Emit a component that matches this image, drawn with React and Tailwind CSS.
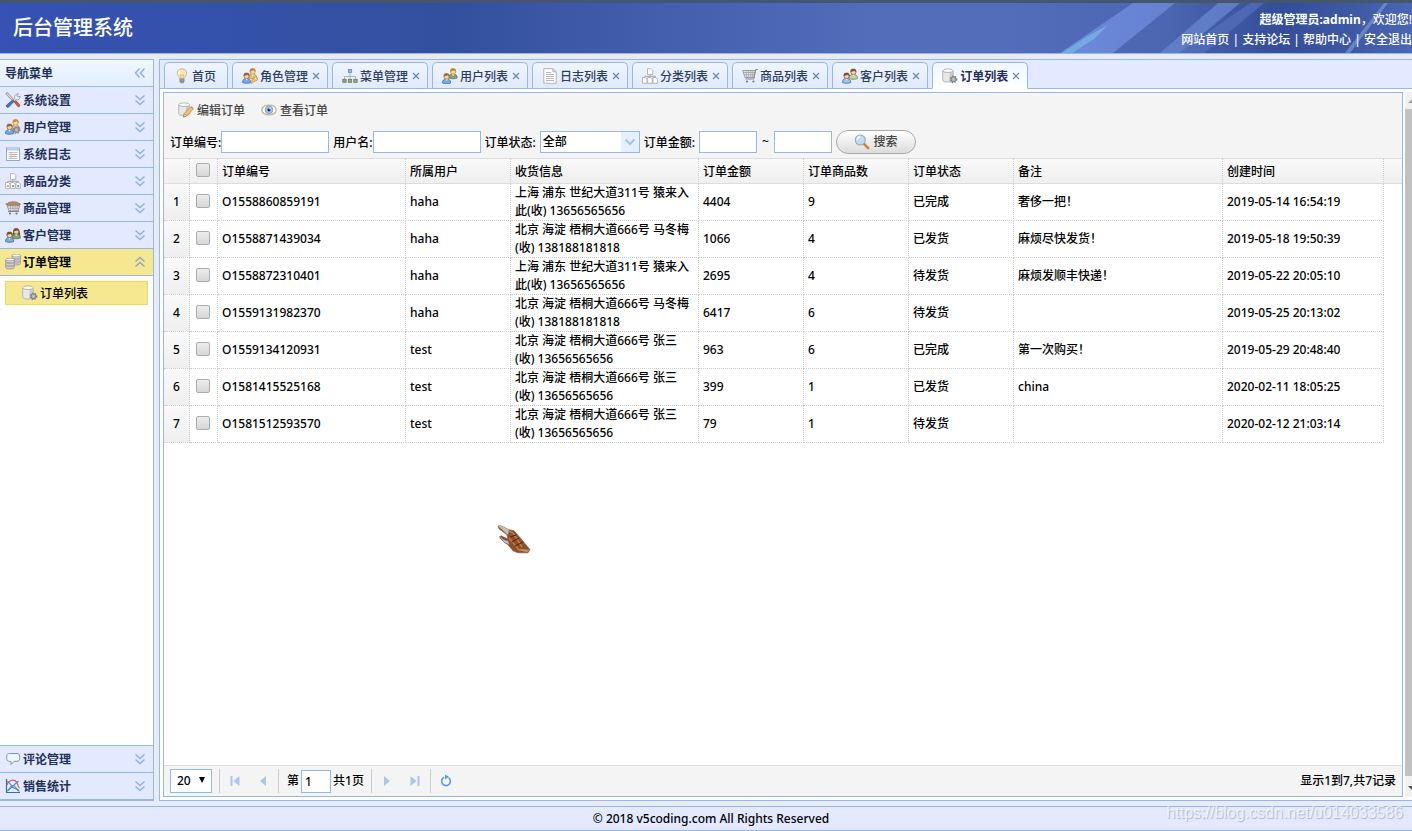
import React from 'react';

const Svg = ({ children, className = 'size-4 shrink-0' }) => (
  <svg viewBox="0 0 16 16" className={className} aria-hidden="true">{children}</svg>
);

const Person = ({ x = 0, y = 0, hair, shirt, edge, face = '#f6d3a8' }) => (
  <g transform={`translate(${x} ${y})`}>
    <path d="M0.5 10 C0.5 7 2 6 4.5 6 S8.700 7 8.700 10 C7 11 2 11 .5 10Z" fill={shirt} stroke={edge} strokeWidth=".8" />
    <path d="M3.300 6 L4.600 8 L6 6Z" fill="#fff" />
    <circle cx="4.600" cy="3.600" r="2.600" fill={face} stroke={hair} strokeWidth=".7" />
    <path d="M1.700 3.800 C1.300 0 3.500 .2 4.600 .2 S8 .2 7.500 3.800 C6.500 3.600 6 2.600 5.800 2.200 C4.500 3 3 2.800 1.700 3.800Z" fill={hair} />
  </g>
);

const Gear = ({ x, y, r = 2.6, color = '#858585' }) => (
  <g transform={`translate(${x} ${y})`}>
    <circle r={r} fill="#d4d4d4" stroke={color} strokeWidth="1.200" />
    <circle r={r + 0.9} fill="none" stroke={color} strokeWidth="1.300" strokeDasharray="1.400 1.350" />
    <circle r=".9" fill="#fff" stroke={color} strokeWidth=".7" />
  </g>
);

const Cylinder = ({ x = 1, y = 1, w = 9, h = 11 }) => (
  <g transform={`translate(${x} ${y})`} stroke="#a8a8a8" strokeWidth=".8">
    <path d={`M0 2 V${h - 2} C0 ${h + 0.5} ${w} ${h + 0.5} ${w} ${h - 2} V2Z`} fill="#e8e8e8" />
    <path d={`M${w * 0.65} 3 V${h - 0.5} L${w} ${h - 2} V2Z`} fill="#c9c9c9" stroke="none" />
    <ellipse cx={w / 2} cy="2" rx={w / 2} ry="1.800" fill="#fafafa" />
  </g>
);

const Tree = ({ top, leaf, edge }) => (
  <Svg>
    <path d="M8 5v4M2.500 11V8.500h11V11M8 8.500V11" fill="none" stroke="#aaa" strokeWidth=".9" />
    <rect x="6.300" y="1.500" width="3.400" height="3" fill={top} stroke="#5f87c4" strokeWidth=".7" />
    {[0.8, 6.3, 11.8].map((x) => <rect key={x} x={x} y="11.300" width="3.400" height="3" fill={leaf} stroke={edge} strokeWidth=".7" />)}
  </Svg>
);

const PageTree = ({ dots }) => (
  <Svg>
    <path d="M8 6v2.500M2.700 10V8.300h10.600V10" fill="none" stroke="#a5a5a5" />
    <path d="M5.500.7h3.600l1.700 1.700v4H5.500Z" fill="#fff" stroke="#a5a5a5" strokeWidth=".8" />
    {[0.5, 5.7, 10.9].map((x, i) => (
      <g key={x}>
        <path d={`M${x} 9.500h3l1.500 1.500v4.300h-4.500Z`} fill="#fff" stroke="#a5a5a5" strokeWidth=".8" />
        {dots && <rect x={x + 1.3} y="12" width="2" height="2" fill={['#e0a458', '#87b56b', '#6f9bd6'][i]} />}
      </g>
    ))}
  </Svg>
);

const Cart = ({ basket }) => (
  <Svg>
    {basket
      ? <path d="M.5 4h15M3 11.500h11" fill="none" stroke="#858585" strokeWidth="1" />
      : <path d="M15.800 1.500h-2l-2 9.500H3.500" fill="none" stroke="#858585" strokeWidth="1" />}
    <path d={basket ? 'M1.500 4h13.500l-1.700 6.800H4Z' : 'M.7 2.500h12.700l-1.700 7H3Z'} fill="#ececec" stroke="#858585" strokeWidth=".8" />
    <path d={basket ? 'M2 6h12.500M3 8.300h10.900M5 4l.8 6.500M7.700 4l.3 6.500M10.300 4l-.3 6.500M12.700 4l-.9 6.500' : 'M1.300 4.500h11.700M2 6.800h10.300M3.800 2.500l.9 7M6.300 2.500l.5 7M8.800 2.500v7M11 2.500l-.5 7'} stroke="#999" strokeWidth=".7" fill="none" />
    {basket && <path d="M2 3.800C3.500 1 13 1 14.500 3.800l-.4 1.400H2.500Z" fill="#b98d63" stroke="#8a6440" strokeWidth=".6" />}
    <circle cx="5" cy="13.500" r="1.100" fill="#777" /><circle cx="11.500" cy="13.500" r="1.100" fill="#777" />
  </Svg>
);

const icons = {
  bulb: (
    <Svg>
      <path d="M8 .8c-3 0-4.700 2-4.700 4.500 0 2.200 2.200 3.200 2.600 5.500h4.200c.4-2.300 2.600-3.300 2.600-5.500C12.700 2.800 11 .8 8 .8Z" fill="#fbe8bb" stroke="#c9a86f" strokeWidth=".8" />
      <path d="M6 2.600C4.800 3.300 4.600 4.700 5 6" stroke="#fff" strokeWidth="1.300" fill="none" />
      <path d="M7 10.500 6.500 6.500 8 7.300l1.500-.8-.5 4" stroke="#d0a14c" strokeWidth=".6" fill="none" />
      <path d="M5.900 11h4.200v2.500l-1 1.500H6.900l-1-1.500Z" fill="#b3b6bb" stroke="#777" strokeWidth=".6" />
      <path d="M6 12.300h4M6.300 13.600h3.500" stroke="#71757b" strokeWidth=".6" />
    </Svg>
  ),
  tools: (
    <Svg>
      <path d="m1.200 1 1.300-.3 6 6.600-1.400 1.200L1.200 2.300Z" fill="#d7d9dd" stroke="#74777c" strokeWidth=".7" />
      <path d="m8 8.800 1.700-1.500 5 5.600c.7 1.100-.8 2.300-1.800 1.500Z" fill="#d85b25" stroke="#933817" strokeWidth=".7" />
      <path d="M9.800 6.600c-.8-2.500.9-5 3.600-4.900L12 3.500l.7 1.200 2.500-.3c-.1 2.600-2.200 3.900-4.200 3.300L9.500 9 8 7.900Z" fill="#eceef1" stroke="#83868b" strokeWidth=".7" />
      <path d="m7.400 8.200 1.500 1.400-5.300 5.500c-1.400.7-2.800-.6-2.100-1.900Z" fill="#3975cf" stroke="#204b91" strokeWidth=".7" />
    </Svg>
  ),
  userGear: (
    <Svg>
      <Person x={6} y={0} hair="#c68a2d" shirt="#d9bd92" edge="#9f8a64" />
      <Person x={0} y={4.5} hair="#8d6844" shirt="#72a8e8" edge="#3c70b4" />
      <Gear x={11.5} y={11} r={2.4} />
    </Svg>
  ),
  userKey: (
    <Svg>
      <Person x={6} y={0} hair="#c68a2d" shirt="#e6c178" edge="#b58c45" />
      <Person x={0} y={4.5} hair="#8d6844" shirt="#72a8e8" edge="#3c70b4" />
      <path d="m8 14.800 3-3.300c-.5-2.400 3.500-4 4.400-1.500.6 2-1.200 3.500-3 3l-2.300 2.300Z" fill="#f5ca58" stroke="#b78326" strokeWidth=".7" />
      <circle cx="13.600" cy="10.300" r=".7" fill="#fff" />
    </Svg>
  ),
  users: (
    <Svg>
      <Person x={6.5} y={0} hair="#c68a2d" shirt="#8a9f70" edge="#66794f" />
      <Person x={0} y={5} hair="#a06e35" shirt="#72a8e8" edge="#3c70b4" />
    </Svg>
  ),
  customers: (
    <Svg>
      <path d="M7.800 8.500C7.200 0 15.300-1 15.200 8.500Z" fill="#6b5236" />
      <Person x={6.7} y={1} hair="#705433" shirt="#84a46e" edge="#4e7345" />
      <Person x={0} y={4.5} hair="#745237" shirt="#78abe2" edge="#3e6ba5" />
    </Svg>
  ),
  customerPair: (
    <Svg>
      <Person x={6.8} y={0.5} hair="#855423" shirt="#c4d2a7" edge="#758759" />
      <Person x={0} y={4.5} hair="#855423" shirt="#9bc3f2" edge="#3e6ba5" />
    </Svg>
  ),
  log: (
    <Svg>
      <rect x="1.500" y="2" width="13" height="12.500" fill="#fff" stroke="#8fa9cc" />
      <path d="M2 2.500h12v2H2Z" fill="#b5cdec" />
      <path d="M3.500 6.500h9M3.500 8.500h9M3.500 10.500h9M3.500 12.500h9M6 6v7" stroke="#9db2cf" strokeWidth=".8" />
      <path d="M7 8.500h5M7 10.500h3" stroke="#dfa276" strokeWidth="1" />
    </Svg>
  ),
  doc: (
    <Svg>
      <path d="M1.800.7h9l3.400 3.200v11.400H1.800Z" fill="#fff" stroke="#adadad" strokeWidth=".9" />
      <path d="M10.800.7v3.200h3.400Z" fill="#ddd" stroke="#adadad" strokeWidth=".7" />
      <path d="M4 4.500h5M4 6.500h8M4 8.500h8M4 10.500h8M4 12.500h8" stroke="#b0b0b0" strokeWidth=".9" />
    </Svg>
  ),
  tree: <Tree top="#8bb8f2" leaf="#8bab78" edge="#5f7550" />,
  pageTreeDots: <PageTree dots />,
  pageTree: <PageTree />,
  basketCart: <Cart basket />,
  cart: <Cart />,
  servers: (
    <Svg>
      {[8.5, 5.5, 2.5].map((y) => <g key={y}><path d={`M7 ${y - 1}v2c0 2 8.500 2 8.500 0v-2Z`} fill="#c9c9c9" stroke="#888" strokeWidth=".6" /><ellipse cx="11.250" cy={y - 1} rx="4.250" ry="1.300" fill="#f8f8f8" stroke="#999" strokeWidth=".6" /></g>)}
      {[12.5, 9.5, 6.5].map((y) => <g key={y}><path d={`M.7 ${y - 1}v2c0 2 8.600 2 8.600 0v-2Z`} fill="#d2d2d2" stroke="#777" strokeWidth=".6" /><ellipse cx="5" cy={y - 1} rx="4.300" ry="1.300" fill="#fff" stroke="#888" strokeWidth=".6" /></g>)}
    </Svg>
  ),
  dbGear: <Svg><Cylinder x={0.7} y={0.7} w={10.5} h={13.500} /><Gear x={11.5} y={11.3} r={2.4} /></Svg>,
  dbEdit: (
    <Svg>
      <Cylinder x={0.7} y={0.7} w={11} h={13} />
      <path d="m5.500 15 .8-3.600 6-6.200c1.200-.8 3.200.8 2.600 2.200l-6 6.300Z" fill="#f7c268" stroke="#b9823a" strokeWidth=".7" />
      <path d="m12.300 5.200 2.600 2.300.4-1.100c0-1.200-1.200-2-2.100-1.900Z" fill="#e58c7c" />
      <path d="m5.500 15 .8-3.400 2.500 2.100Z" fill="#fae4bf" stroke="#8a6231" strokeWidth=".5" />
    </Svg>
  ),
  eye: (
    <Svg>
      <path d="M.7 8C2 1.500 14 1.500 15.300 8 14 14.500 2 14.500 .7 8Z" fill="#fff" stroke="#cdb691" strokeWidth="1.300" />
      <circle cx="8" cy="7.800" r="3.900" fill="#9cc6f2" stroke="#6b93c9" strokeWidth=".7" />
      <circle cx="8" cy="7.800" r="1.600" fill="#1f3557" /><circle cx="9" cy="6.800" r=".7" fill="#fff" />
    </Svg>
  ),
  search: (
    <Svg>
      <path d="m10 10 4.200 4.200" stroke="#c8873b" strokeWidth="2.600" strokeLinecap="round" />
      <circle cx="6.300" cy="6" r="5" fill="#b8dcfb" stroke="#9aa7bd" strokeWidth="1.100" />
      <path d="M3 6c.2-1.900 1.300-2.800 3-3" stroke="#fff" strokeWidth="1.300" fill="none" />
    </Svg>
  ),
  comment: (
    <Svg>
      <path d="M4.500 2.500h7.500c1.700 0 2.700 1.200 2.700 2.500v2.800c0 1.400-1 2.500-2.700 2.500H9L6 13.500V10.300H4.500C2.700 10.300 1.700 9.200 1.700 7.800V5C1.700 3.600 2.700 2.500 4.500 2.500Z" fill="#edf5ff" stroke="#7a95bd" strokeWidth="1" />
    </Svg>
  ),
  chart: (
    <Svg>
      <path d="M1.500 1v13.500H15" fill="none" stroke="#3d68b2" strokeWidth="1.200" />
      <path d="M2 13C5 12 5 7.500 8 7.500s3 5 6.500 6" fill="none" stroke="#66a068" strokeWidth="1.200" />
      <path d="M2 7c2-6 8-6 10-2 1 2 1 4 2.500 5" fill="none" stroke="#d65b45" strokeWidth="1.200" />
      <path d="M2 3c3 1 4 5 6 6.500s4 1 6 3M3 12.500 13.500 3" fill="none" stroke="#5488d5" strokeWidth="1.100" />
    </Svg>
  ),
};

const Chevrons = ({ dir }) => {
  const d = {
    down: 'M3.500 3.500 8 7.500l4.500-4M3.500 8.500 8 12.500l4.500-4',
    up: 'M3.500 7.500 8 3.500l4.500 4M3.500 12.500 8 8.500l4.500 4',
    left: 'M7.500 3.500 3.500 8l4 4.500M12.500 3.500 8.500 8l4 4.500',
  }[dir];
  return <Svg><path d={d} fill="none" stroke={dir === 'up' ? '#8fa9bd' : '#8ab0ec'} strokeWidth="1.500" /></Svg>;
};

const NavItem = ({ icon, label, active }) => (
  <button className={`flex h-[27px] w-full shrink-0 items-center gap-[2px] border-b border-[#95b8e7] pl-[5px] pr-[5px] text-left font-bold ${active ? 'bg-[#f5e890] text-black' : 'bg-[#e3eaff] text-[#1f3058]'}`}>
    {icons[icon]}
    <span className="grow pt-[2px]">{label}</span>
    <Chevrons dir={active ? 'up' : 'down'} />
  </button>
);

const navTop = [
  ['tools', '系统设置'], ['userGear', '用户管理'], ['log', '系统日志'], ['pageTreeDots', '商品分类'],
  ['basketCart', '商品管理'], ['customers', '客户管理'], ['servers', '订单管理'],
];

const tabs = [
  ['bulb', '首页'], ['userKey', '角色管理'], ['tree', '菜单管理'], ['users', '用户列表'], ['doc', '日志列表'],
  ['pageTree', '分类列表'], ['cart', '商品列表'], ['customerPair', '客户列表'], ['dbGear', '订单列表'],
];

const columns = ['订单编号', '所属用户', '收货信息', '订单金额', '订单商品数', '订单状态', '备注', '创建时间'];

const rows = [
  ['O1558860859191', 'haha', '上海 浦东 世纪大道311号 猿来入此(收) 13656565656', '4404', '9', '已完成', '奢侈一把！', '2019-05-14 16:54:19'],
  ['O1558871439034', 'haha', '北京 海淀 梧桐大道666号 马冬梅(收) 138188181818', '1066', '4', '已发货', '麻烦尽快发货！', '2019-05-18 19:50:39'],
  ['O1558872310401', 'haha', '上海 浦东 世纪大道311号 猿来入此(收) 13656565656', '2695', '4', '待发货', '麻烦发顺丰快递！', '2019-05-22 20:05:10'],
  ['O1559131982370', 'haha', '北京 海淀 梧桐大道666号 马冬梅(收) 138188181818', '6417', '6', '待发货', '', '2019-05-25 20:13:02'],
  ['O1559134120931', 'test', '北京 海淀 梧桐大道666号 张三(收) 13656565656', '963', '6', '已完成', '第一次购买！', '2019-05-29 20:48:40'],
  ['O1581415525168', 'test', '北京 海淀 梧桐大道666号 张三(收) 13656565656', '399', '1', '已发货', 'china', '2020-02-11 18:05:25'],
  ['O1581512593570', 'test', '北京 海淀 梧桐大道666号 张三(收) 13656565656', '79', '1', '待发货', '', '2020-02-12 21:03:14'],
];

const Check = ({ label }) => (
  <input type="checkbox" aria-label={label} className="ml-[6px] block size-[14px] appearance-none rounded-[2px] border border-[#acacac] bg-linear-to-b from-[#ededed] to-[#d6d6d6] checked:bg-[#5b87cf]" />
);

const Field = ({ id, label, width }) => (
  <div className="flex items-center">
    <label htmlFor={id} className="pt-[2px]">{label}</label>
    <input id={id} className={`h-[22px] border border-[#95b8e7] bg-white px-1 outline-none ${width}`} />
  </div>
);

const PagerButton = ({ label, children }) => (
  <button aria-label={label} className="flex h-6 w-7 items-center justify-center">
    <Svg>{children}</Svg>
  </button>
);

const Divider = () => <span className="mx-px h-6 w-px bg-[#ccc]" />;

function Header() {
  return (
    <header className="relative flex h-[54px] shrink-0 items-center justify-between overflow-hidden border-b border-[#95b8e7] border-t-[3px] border-t-[#46566c] pl-[13px]">
      <div className="absolute inset-0 bg-linear-to-r from-[#3552b4] from-0% via-[#33509f] via-32% to-[#536dbb] to-62%" />
      <svg className="absolute inset-y-0 right-0 h-full w-[412px]" viewBox="0 0 412 50" preserveAspectRatio="none" aria-hidden="true">
        <defs>
          <linearGradient id="sky" x1="0" x2="1">
            <stop offset="0" stopColor="#536dbb" /><stop offset=".4" stopColor="#4d66b2" />
            <stop offset=".68" stopColor="#344d99" /><stop offset=".85" stopColor="#3f58a3" /><stop offset="1" stopColor="#4a66b4" />
          </linearGradient>
          <linearGradient id="beam" x1="0" x2="1">
            <stop offset="0" stopColor="#6a8bd8" /><stop offset="1" stopColor="#6780d2" />
          </linearGradient>
        </defs>
        <rect width="412" height="50" fill="url(#sky)" />
        <path d="M133 0h42l-62 50H60Z" fill="url(#beam)" />
        <path d="m108 22-20 11-26 17h10l22-14Z" fill="#78b9e6" opacity=".7" />
        <path d="M218 0h22l-60 50h-20Z" fill="#6482cb" opacity=".85" />
        <path d="M250 0h14l-60 50h-26Z" fill="#5570bb" opacity=".7" />
        <path d="M384 0h4l-38 50h-5Z" fill="#7796d8" opacity=".7" />
      </svg>
      <h1 className="relative text-xl font-medium text-white">后台管理系统</h1>
      <div className="relative whitespace-nowrap pt-[3px] text-right leading-5 text-white">
        <div><b>超级管理员:admin</b>，欢迎您!</div>
        <nav><a href="#home">网站首页</a> | <a href="#forum">支持论坛</a> | <a href="#help">帮助中心</a> | <a href="#logout">安全退出</a></nav>
      </div>
    </header>
  );
}

function Sidebar() {
  return (
    <aside className="flex w-[154px] shrink-0 flex-col border-y border-r border-[#95b8e7] bg-white">
      <div className="flex h-[27px] shrink-0 items-center justify-between border-b border-[#95b8e7] bg-linear-to-b from-[#f1f7ff] to-[#e3eeff] pl-[5px] pr-[5px] font-bold text-[#1f3058]">
        <span className="pt-[2px]">导航菜单</span>
        <button aria-label="收起"><Chevrons dir="left" /></button>
      </div>
      {navTop.map(([icon, label]) => <NavItem key={label} icon={icon} label={label} active={label === '订单管理'} />)}
      <div className="grow p-[5px]">
        <a href="#orders" className="flex h-6 items-center gap-[2px] border border-[#eed657] bg-[#f5e890] pl-4 text-black">
          {icons.dbGear}<span className="pt-[2px]">订单列表</span>
        </a>
      </div>
      <div className="border-t border-[#95b8e7]">
        <NavItem icon="comment" label="评论管理" />
        <NavItem icon="chart" label="销售统计" />
      </div>
    </aside>
  );
}

function Tabs() {
  return (
    <div className="flex h-[29px] shrink-0 items-end gap-1 border-b border-[#95b8e7] bg-[#e3eaff] pl-1">
      {tabs.map(([icon, label], i) => {
        const active = i === tabs.length - 1;
        return (
          <div key={label} className={`flex shrink-0 items-center rounded-t-[5px] border border-[#95b8e7] ${active ? '-mb-px h-[27px] border-b-white bg-linear-to-b from-[#eff6ff] to-white font-bold text-[#1f3058]' : 'h-[26px] border-b-0 bg-linear-to-b from-[#eff5ff] to-[#e0eaff] text-[#2c3e5e]'}`}>
            <button className="flex items-center gap-[2px] pl-[9px]">{icons[icon]}<span className="pt-[2px]">{label}</span></button>
            {i > 0 ? (
              <button aria-label={`关闭${label}`} className="flex h-4 w-[19px] items-center justify-center pr-[3px]">
                <svg viewBox="0 0 8 8" className="size-2" aria-hidden="true"><path d="m1 1 6 6M7 1 1 7" stroke="#6685b8" strokeWidth="1.200" /></svg>
              </button>
            ) : <span className="w-[11px]" />}
          </div>
        );
      })}
    </div>
  );
}

function Filters() {
  return (
    <div className="shrink-0 bg-[#f4f4f4]">
      <div className="flex h-[34px] items-center gap-4 pl-[14px] text-[#444]">
        <button className="flex items-center gap-[3px]">{icons.dbEdit}<span className="pt-[2px]">编辑订单</span></button>
        <button className="flex items-center gap-[3px]">{icons.eye}<span className="pt-[2px]">查看订单</span></button>
      </div>
      <form className="flex h-[31px] items-center gap-1 whitespace-nowrap pb-[2px] pl-[6px]" onSubmit={(e) => e.preventDefault()}>
        <Field id="orderNo" label="订单编号:" width="w-[108px]" />
        <Field id="userName" label="用户名:" width="w-[108px]" />
        <label htmlFor="status" className="pt-[2px]">订单状态:</label>
        <div className="relative">
          <select id="status" className="block h-[22px] w-[100px] appearance-none border border-[#95b8e7] bg-white px-[2px] outline-none">
            <option>全部</option><option>待发货</option><option>已发货</option><option>已完成</option>
          </select>
          <span className="pointer-events-none absolute inset-y-px right-px flex w-[18px] items-center justify-center bg-[#e6efff]">
            <svg viewBox="0 0 12 8" className="h-2 w-3" aria-hidden="true"><path d="m1.500 1.500 4.500 4.500 4.500-4.500" fill="none" stroke="#a2c2ee" strokeWidth="2" /></svg>
          </span>
        </div>
        <label htmlFor="minAmount" className="pt-[2px]">订单金额:</label>
        <input id="minAmount" className="h-[22px] w-[58px] border border-[#95b8e7] bg-white px-1 outline-none" />
        <label htmlFor="maxAmount" className="px-px">~</label>
        <input id="maxAmount" className="h-[22px] w-[58px] border border-[#95b8e7] bg-white px-1 outline-none" />
        <button className="flex h-6 w-20 items-center justify-center gap-[3px] rounded-full border border-[#aaa] bg-linear-to-b from-white to-[#dcdcdc] text-[#444]">{icons.search}搜索</button>
      </form>
    </div>
  );
}

function Grid() {
  const dotted = 'border-r border-dotted border-[#ccc]';
  const head = 'border-y border-r border-y-[#ddd] border-r-[#ccc] [border-right-style:dotted]';
  return (
    <div className="min-h-0 grow overflow-hidden bg-white">
      <table className="w-full table-fixed border-separate border-spacing-0 text-left">
        <colgroup>
          <col className="w-[26px]" /><col className="w-[28px]" /><col className="w-[188px]" /><col className="w-[105px]" /><col className="w-[188px]" />
          <col className="w-[105px]" /><col className="w-[105px]" /><col className="w-[105px]" /><col className="w-[209px]" /><col className="w-[161px]" /><col />
        </colgroup>
        <thead>
          <tr className="h-[26px] bg-linear-to-b from-[#f9f9f9] to-[#efefef]">
            <th className={head} />
            <th className={`pb-[2px] ${head}`}><Check label="全选" /></th>
            {columns.map((c) => <th key={c} className={`px-1 pt-[2px] font-medium ${head}`}>{c}</th>)}
            <th className="border-y border-[#ddd]" />
          </tr>
        </thead>
        <tbody>
          {rows.map((row, i) => (
            <tr key={row[0]} className="h-[37px]">
              <td className={`border-b bg-linear-to-b from-[#f9f9f9] to-[#efefef] text-center ${dotted}`}>{i + 1}</td>
              <td className={`border-b pb-[2px] ${dotted}`}><Check label={`选择 ${row[0]}`} /></td>
              {row.map((cell, j) => <td key={j} className={`border-b px-1 py-0 leading-[18px] ${dotted}`}>{cell}</td>)}
              <td />
            </tr>
          ))}
        </tbody>
      </table>
    </div>
  );
}

function Pager() {
  return (
    <div className="flex h-[31px] shrink-0 items-center border-t border-[#ddd] bg-[#f4f4f4] px-[6px]">
      <div className="relative mr-[6px]">
        <select aria-label="每页条数" className="block h-6 w-[42px] appearance-none border border-[#95b8e7] bg-white pl-[6px] outline-none">
          <option>20</option><option>50</option>
        </select>
        <svg viewBox="0 0 6 6" className="pointer-events-none absolute right-[7px] top-2 size-[6px]" aria-hidden="true"><path d="M0 0h6L3 6Z" fill="#000" /></svg>
      </div>
      <Divider />
      <PagerButton label="首页"><path d="M3.500 3h2v10h-2ZM12.500 3v10L6.500 8Z" fill="#aac5ef" /></PagerButton>
      <PagerButton label="上一页"><path d="M11 3v10L5 8Z" fill="#aac5ef" /></PagerButton>
      <Divider />
      <label htmlFor="page" className="pl-[7px] pr-[2px]">第</label>
      <input id="page" defaultValue="1" className="h-[23px] w-[30px] border border-[#95b8e7] bg-white px-[3px] outline-none" />
      <span className="pl-[2px] pr-[6px]">共1页</span>
      <Divider />
      <PagerButton label="下一页"><path d="M5 3v10l6-5Z" fill="#aac5ef" /></PagerButton>
      <PagerButton label="末页"><path d="M10.500 3h2v10h-2ZM3.500 3v10l6-5Z" fill="#aac5ef" /></PagerButton>
      <Divider />
      <PagerButton label="刷新">
        <path d="M10.500 4.600A4.400 4.400 0 1 1 6 4.300" fill="none" stroke="#5b9bdc" strokeWidth="1.600" />
        <path d="M7 1.500v5l4-2.700Z" fill="#5b9bdc" />
      </PagerButton>
      <span className="ml-auto">显示1到7,共7记录</span>
    </div>
  );
}

function ScrollTrack() {
  return (
    <div className="ml-[2px] flex w-[7px] shrink-0 flex-col overflow-hidden bg-[#f1f1f1]" aria-hidden="true">
      <svg viewBox="0 0 7 17" className="h-[17px] w-[7px] shrink-0"><path d="m8 6-5 5h5Z" fill="#a3a3a3" /></svg>
      <span className="grow bg-[#c1c1c1]" />
      <svg viewBox="0 0 7 21" className="h-[21px] w-[7px] shrink-0"><path d="M3 10h5v5Z" fill="#505050" /></svg>
    </div>
  );
}

export default function App() {
  return (
    <div className="relative flex h-screen flex-col overflow-hidden bg-[#e8ebf6] text-xs font-medium text-black [font-family:'Noto_Sans','Noto_Sans_CJK_SC',sans-serif]">
      <Header />
      <div className="flex min-h-0 grow gap-[5px] py-[5px]">
        <Sidebar />
        <main className="flex min-w-0 grow flex-col border-y border-l border-[#95b8e7] bg-white">
          <Tabs />
          <div className="flex min-h-0 grow py-[3px] pl-[3px]">
            <section className="flex min-w-0 grow flex-col border border-[#95b8e7]">
              <Filters />
              <Grid />
              <Pager />
            </section>
            <ScrollTrack />
          </div>
        </main>
      </div>
      <footer className="flex h-[25px] shrink-0 items-center justify-center border-y border-[#95b8e7] bg-[#e3eaff] pl-[10px]">© 2018 v5coding.com All Rights Reserved</footer>
      <div className="pointer-events-none absolute bottom-[6px] right-[9px] text-base leading-6 font-normal text-white/70 [font-family:'Liberation_Sans',sans-serif] [text-shadow:1px_1px_1px_rgba(120,130,160,0.5)]">https://blog.csdn.net/u014033586</div>
      <svg className="pointer-events-none absolute left-[497px] top-[525px] h-[29px] w-[34px]" viewBox="0 0 34 29" aria-hidden="true">
        <path d="m1 1 3-.2 8 4 5 1 7 8 9 11-2 3h-10l-5-2-5-6-4-3-4-4 1-2 4 2 3 1-1-4-8-6Z" fill="#8f4f2a" stroke="#7a5a48" strokeWidth=".7" />
        <path d="m1 1 3-.2 8 4-1 5-2-1.500Z" fill="#c9bcb0" /><path d="m2.500 11.500 4 3 5 1.500 1 4-5-2.500-4-4Z" fill="#cbbcc3" stroke="#6e5a66" strokeWidth=".6" />
        <path d="m12 6 4 2 4 6 5 8M12 13l6 7 4 5" stroke="#c9783f" strokeWidth="1.500" fill="none" />
        <path d="m13 12 6-2M15 17l7-4M18 21l8-4" stroke="#472919" strokeWidth="1" />
        <path d="m20 25 5-1 8 1-3 2Z" fill="#b99a63" />
      </svg>
    </div>
  );
}
